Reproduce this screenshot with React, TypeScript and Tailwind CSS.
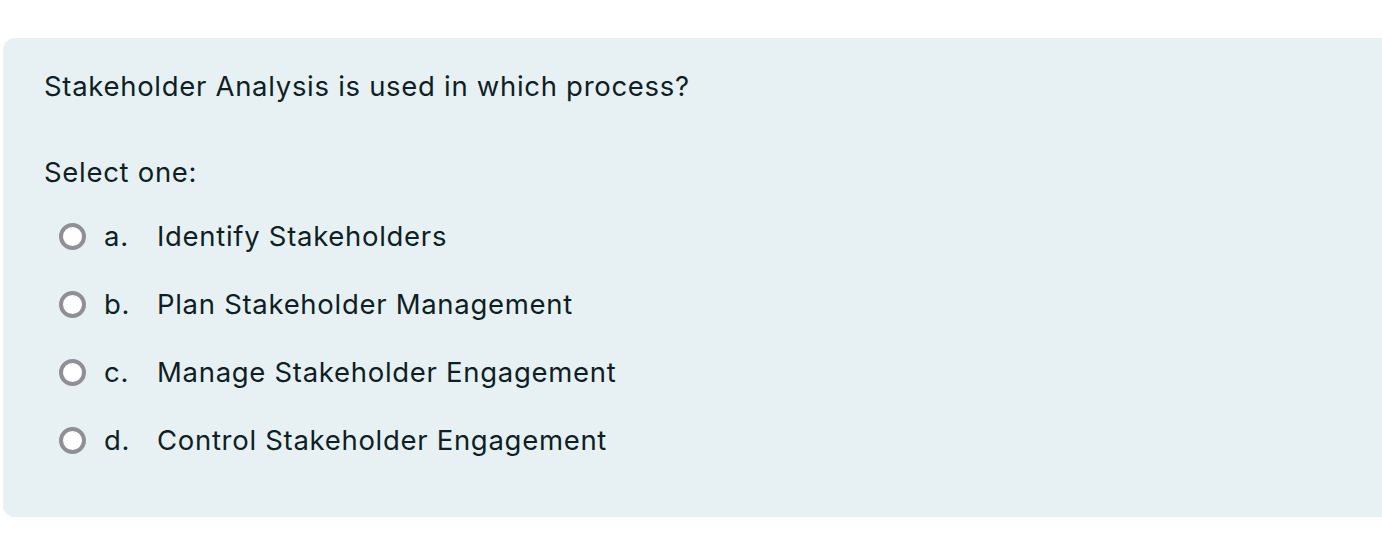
export default function App() {
  const options = [
    { l: "a.", t: "Identify Stakeholders" },
    { l: "b.", t: "Plan Stakeholder Management" },
    { l: "c.", t: "Manage Stakeholder Engagement" },
    { l: "d.", t: "Control Stakeholder Engagement" },
  ];
  return (
    <div className="w-[1382px] h-[546px] bg-white overflow-hidden pt-[38px] pl-[3px]" style={{ fontFamily: "Inter, 'Liberation Sans', sans-serif" }}>
      <div className="w-[1392px] h-[479px] bg-[#e7f1f4] rounded-[12px] pl-[41px] pt-[28px] text-[#0f1f24] text-[27.5px] tracking-[0.7px] leading-[40px]">
        <div>Stakeholder Analysis is used in which process?</div>
        <div className="mt-[46px]">Select one:</div>
        <div className="mt-[24px] flex flex-col gap-[28px]">
          {options.map((o) => (
            <div key={o.l} className="flex items-center h-[40px]">
              <div className="ml-[15px] w-[27px] h-[27px] rounded-full border-[4px] border-[#8f8f96] bg-white shrink-0" />
              <span className="ml-[18px] w-[53px]">{o.l}</span>
              <span>{o.t}</span>
            </div>
          ))}
        </div>
      </div>
    </div>
  );
}
